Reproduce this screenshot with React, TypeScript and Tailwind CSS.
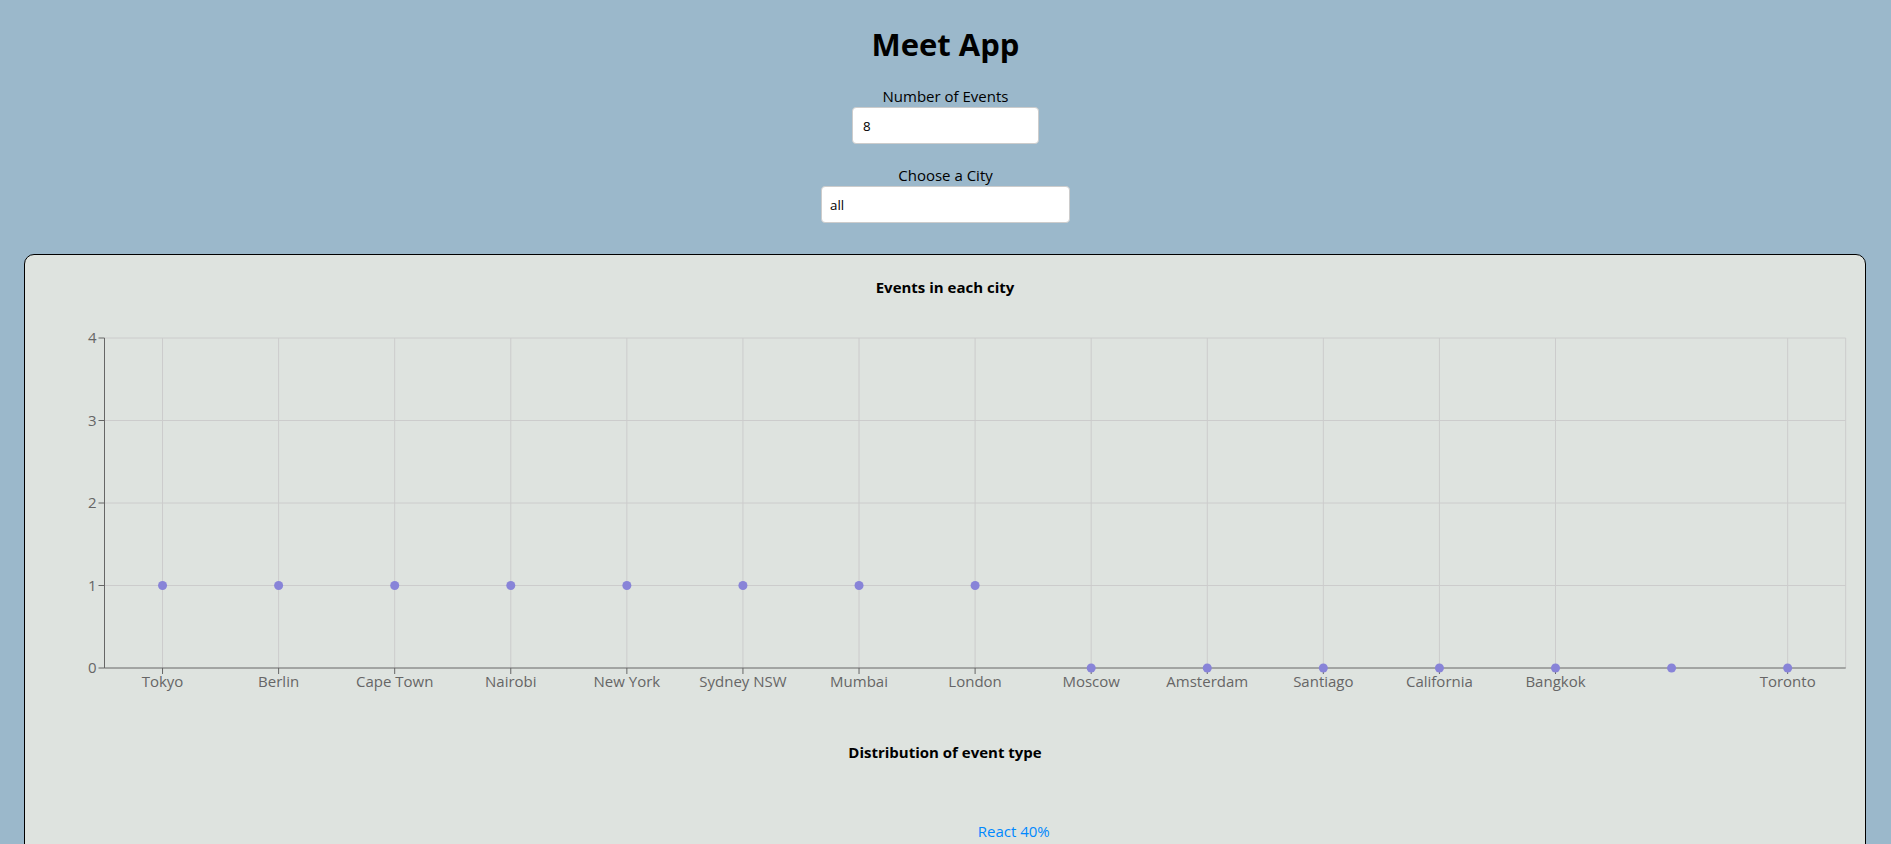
import React from "react";

const cities = [
  { name: "Tokyo", count: 1 },
  { name: "Berlin", count: 1 },
  { name: "Cape Town", count: 1 },
  { name: "Nairobi", count: 1 },
  { name: "New York", count: 1 },
  { name: "Sydney NSW", count: 1 },
  { name: "Mumbai", count: 1 },
  { name: "London", count: 1 },
  { name: "Moscow", count: 0 },
  { name: "Amsterdam", count: 0 },
  { name: "Santiago", count: 0 },
  { name: "California", count: 0 },
  { name: "Bangkok", count: 0 },
  { name: "", count: 0 },
  { name: "Toronto", count: 0 },
];

// plot box in page pixels
const left = 104.5;
const right = 1845.7;
const top = 338;
const bottom = 668;
const band = (right - left) / cities.length;
const unit = (bottom - top) / 4;

const font = "'Open Sans', 'Noto Sans', sans-serif";

function CityChart() {
  const xs = cities.map((_, i) => left + band * (i + 0.5));
  const ys = [0, 1, 2, 3, 4].map((v) => ({ v, y: bottom - v * unit }));

  return (
    <svg width={1840} height={413} viewBox="25 297 1840 413" className="block" style={{ fontFamily: font }}>
      {/* grid */}
      <g stroke="#ccc" strokeWidth={1}>
        {ys
          .filter((t) => t.v > 0)
          .map((t) => (
            <line key={t.v} x1={left} x2={right} y1={t.y} y2={t.y} />
          ))}
        {xs.map((x, i) =>
          cities[i].name ? <line key={i} x1={x} x2={x} y1={top} y2={bottom} /> : null,
        )}
        <line x1={right} x2={right} y1={top} y2={bottom} />
      </g>

      {/* y axis */}
      <g stroke="#666">
        <line x1={left} x2={left} y1={top} y2={bottom} />
        {ys.map((t) => (
          <line key={t.v} x1={left - 6} x2={left} y1={t.y} y2={t.y} />
        ))}
      </g>
      <g fill="#666" fontSize={15} textAnchor="end">
        {ys.map((t) => (
          <text key={t.v} x={left - 8} y={t.y + 5}>
            {t.v}
          </text>
        ))}
      </g>

      {/* x axis */}
      <g stroke="#666">
        <line x1={left} x2={right} y1={bottom} y2={bottom} />
        {xs.map((x, i) =>
          cities[i].name ? <line key={i} x1={x} x2={x} y1={bottom} y2={bottom + 6} /> : null,
        )}
      </g>
      <g fill="#666" fontSize={15} textAnchor="middle">
        {xs.map((x, i) => (
          <text key={i} x={x} y={bottom + 19}>
            {cities[i].name}
          </text>
        ))}
      </g>

      {/* points */}
      <g fill="#8884d8">
        {xs.map((x, i) => (
          <circle key={i} cx={x} cy={bottom - cities[i].count * unit} r={4.5} />
        ))}
      </g>
    </svg>
  );
}

const genres = [
  { name: "React", value: 40, color: "#0088FE" },
  { name: "JavaScript", value: 20, color: "#00C49F" },
  { name: "Node", value: 20, color: "#FFBB28" },
  { name: "jQuery", value: 10, color: "#FF8042" },
  { name: "Angular", value: 10, color: "#8884d8" },
];

function GenreChart() {
  const cx = 945;
  const cy = 933;
  const r = 86;
  let start = 0;

  const slices = genres.map((g) => {
    const sweep = (g.value / 100) * 360;
    const a0 = start;
    const a1 = start + sweep;
    start = a1;
    const rad = (a: number) => (a * Math.PI) / 180;
    const p0 = [cx + r * Math.cos(rad(a0)), cy - r * Math.sin(rad(a0))];
    const p1 = [cx + r * Math.cos(rad(a1)), cy - r * Math.sin(rad(a1))];
    const mid = rad((a0 + a1) / 2);
    const lx = cx + (r + 20) * Math.cos(mid);
    const ly = cy - (r + 20) * Math.sin(mid);
    return {
      ...g,
      d: `M${cx},${cy} L${p0[0]},${p0[1]} A${r},${r} 0 ${sweep > 180 ? 1 : 0} 0 ${p1[0]},${p1[1]} Z`,
      lx,
      ly,
      anchor: Math.cos(mid) >= 0 ? "start" : "end",
    };
  });

  return (
    <svg width={1840} height={400} viewBox="25 762 1840 400" className="block" style={{ fontFamily: font }}>
      {slices.map((s) => (
        <path key={s.name} d={s.d} fill={s.color} stroke="#fff" />
      ))}
      {slices.map((s) => (
        <text
          key={s.name}
          x={s.lx}
          y={s.ly + 5}
          fill={s.color}
          fontSize={15}
          textAnchor={s.anchor}
        >
          {`${s.name} ${s.value}%`}
        </text>
      ))}
    </svg>
  );
}

export default function App() {
  return (
    <div className="min-h-screen bg-[#9bb8cb] pt-[23px] text-black" style={{ fontFamily: font }}>
      <h1 className="text-center text-[31px] font-bold leading-[43px]">Meet App</h1>

      <div className="mt-[20px] flex flex-col items-center">
        <label htmlFor="number-of-events" className="text-[15px] leading-[21px]">
          Number of Events
        </label>
        <input
          id="number-of-events"
          defaultValue="8"
          className="h-[37px] w-[187px] rounded-[4px] border border-[#ccc] bg-white px-[10px] text-[13.33px] outline-none"
        />
      </div>

      <div className="mt-[21px] flex flex-col items-center">
        <label htmlFor="city" className="text-[15px] leading-[21px]">
          Choose a City
        </label>
        <input
          id="city"
          defaultValue="all"
          className="h-[37px] w-[249px] rounded-[4px] border border-[#ccc] bg-white px-[8px] text-[13.33px] outline-none"
        />
      </div>

      <div className="ml-[24px] mt-[31px] w-[1842px] rounded-[10px] border border-black bg-[#dee3df] pt-[22px]">
        <h4 className="text-center text-[15px] font-bold leading-[20px]">Events in each city</h4>
        <CityChart />
        <h4 className="mt-[32px] text-center text-[15px] font-bold leading-[20px]">
          Distribution of event type
        </h4>
        <GenreChart />
      </div>
    </div>
  );
}
